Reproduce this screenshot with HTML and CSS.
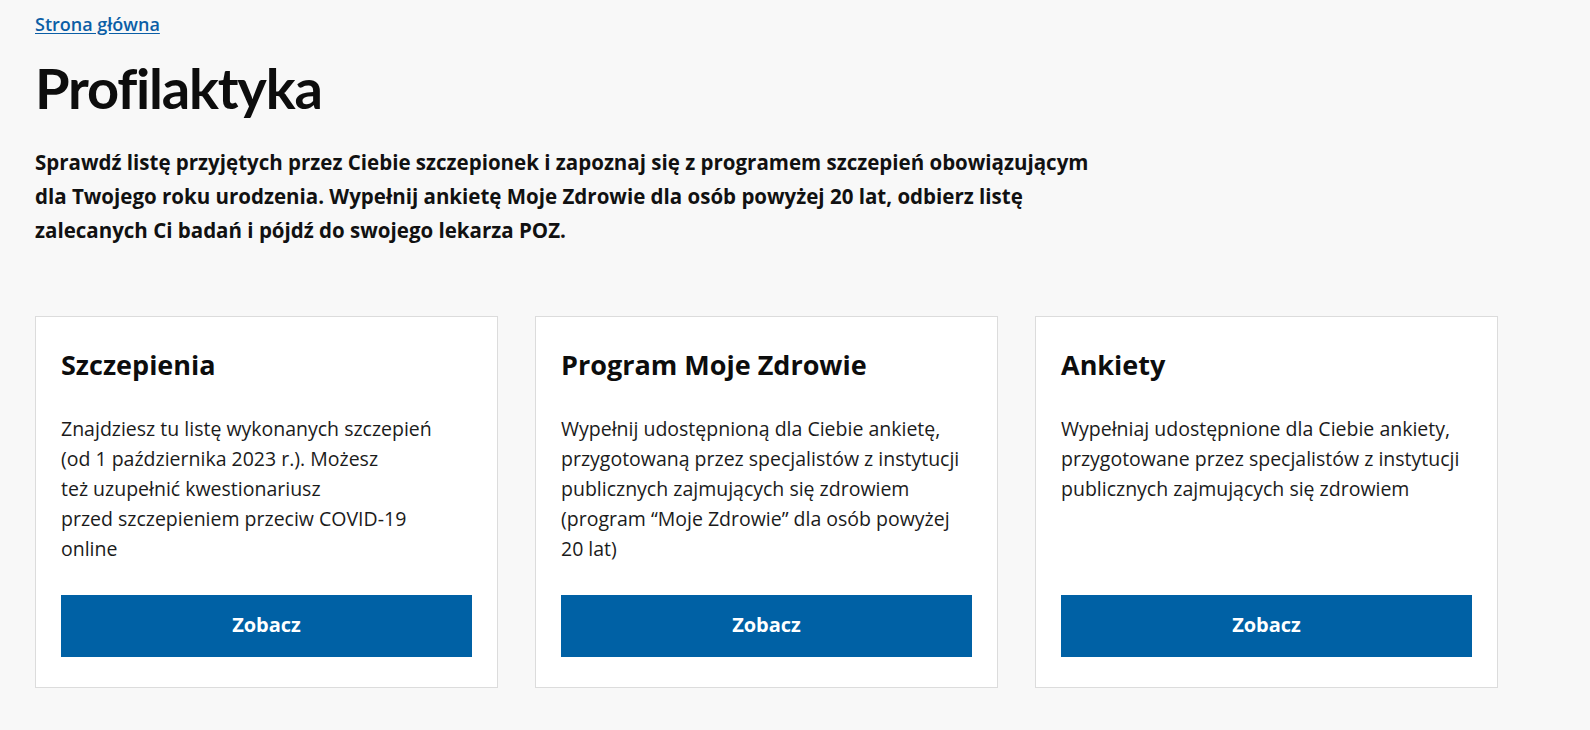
FILE: index.html
```html
<!DOCTYPE html>
<html lang="pl">
<head>
<meta charset="utf-8">
<title>Profilaktyka</title>
<link rel="stylesheet" href="styles.css">
</head>
<body>
<main class="page">
  <nav class="crumbs"><a href="#" class="crumb-link">Strona główna</a></nav>
  <h1 class="page-title">Profilaktyka</h1>
  <p class="lead">Sprawdź listę przyjętych przez Ciebie szczepionek i zapoznaj się z programem szczepień obowiązującym dla Twojego roku urodzenia. Wypełnij ankietę Moje Zdrowie dla osób powyżej 20 lat, odbierz listę zalecanych Ci badań i pójdź do swojego lekarza POZ.</p>
  <section class="cards">
    <article class="card">
      <h2 class="card-title">Szczepienia</h2>
      <p class="card-text">Znajdziesz tu listę wykonanych szczepień<br>(od 1 października 2023 r.). Możesz<br>też uzupełnić kwestionariusz<br>przed szczepieniem przeciw COVID-19<br>online</p>
      <a href="#" class="btn">Zobacz</a>
    </article>
    <article class="card">
      <h2 class="card-title">Program Moje Zdrowie</h2>
      <p class="card-text">Wypełnij udostępnioną dla Ciebie ankietę, przygotowaną przez specjalistów z instytucji publicznych zajmujących się zdrowiem (program “Moje Zdrowie” dla osób powyżej 20 lat)</p>
      <a href="#" class="btn">Zobacz</a>
    </article>
    <article class="card">
      <h2 class="card-title">Ankiety</h2>
      <p class="card-text">Wypełniaj udostępnione dla Ciebie ankiety, przygotowane przez specjalistów z instytucji publicznych zajmujących się zdrowiem</p>
      <a href="#" class="btn">Zobacz</a>
    </article>
  </section>
</main>
</body>
</html>
```
FILE: styles.css
```css
html, body {
  margin: 0;
  padding: 0;
  background: #f8f8f8;
}
body {
  font-family: "Open Sans", "Noto Sans", sans-serif;
  color: #1b1b1b;
}
.page {
  padding: 12px 35px 0 35px;
}
.crumbs {
  line-height: 24px;
  font-size: 18px;
}
.crumb-link {
  color: #0b5ea6;
  font-weight: 600;
  text-decoration: underline;
  text-underline-offset: 2px;
}
.page-title {
  margin: 17px 0 0 0;
  font-family: "Lato", "Open Sans", sans-serif;
  font-size: 56px;
  line-height: 70px;
  font-weight: 700;
  letter-spacing: -1.2px;
  color: #0d0d0d;
}
.lead {
  margin: 22px 0 0 0;
  max-width: 1062px;
  font-size: 20.5px;
  line-height: 34px;
  font-weight: 700;
  color: #111;
}
.cards {
  margin-top: 69px;
  display: grid;
  grid-template-columns: repeat(3, 463px);
  column-gap: 37px;
}
.card {
  background: #fff;
  border: 1px solid #dcdcdc;
  padding: 31px 25px 30px 25px;
  display: flex;
  flex-direction: column;
}
.card-title {
  margin: 0;
  font-size: 27px;
  line-height: 34px;
  font-weight: 700;
  color: #0d0d0d;
}
.card-text {
  margin: 32px 0 31px 0;
  font-size: 19.5px;
  line-height: 30px;
  color: #1b1b1b;
}
.btn {
  margin-top: auto;
  height: 62px;
  box-sizing: border-box;
  padding-bottom: 3px;
  display: flex;
  align-items: center;
  justify-content: center;
  background: #0061a5;
  color: #fff;
  font-size: 20px;
  font-weight: 700;
  text-decoration: none;
}
```
